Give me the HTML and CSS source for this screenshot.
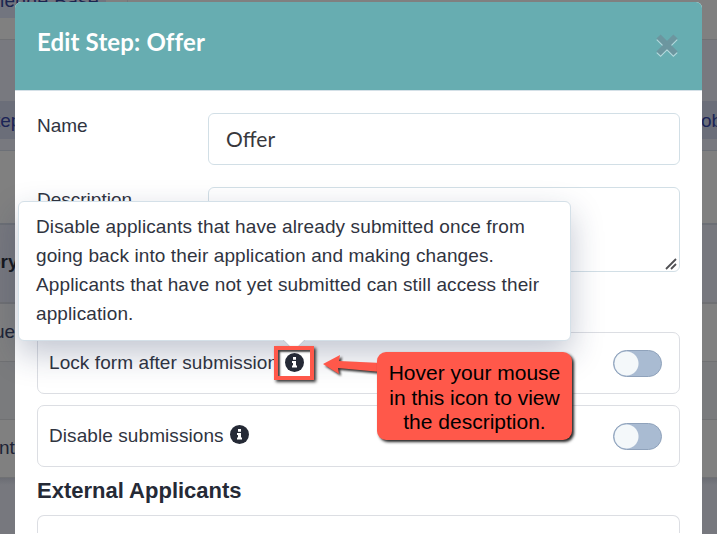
FILE: index.html
```
<!DOCTYPE html>
<html lang="en">
<head>
<meta charset="utf-8">
<title>Edit Step: Offer</title>
<link rel="stylesheet" href="styles.css">
</head>
<body>
<div class="backdrop">
  <div class="band band-nav"><span class="nav-chip">ledge Base</span><span class="nav-toggle"></span></div>
  <div class="band band-bar"></div>
  <div class="band band-gap"></div>
  <div class="band band-tabs"><span>tep</span><span>ob</span></div>
  <div class="band band-tabs-end"></div>
  <div class="band band-filter"></div>
  <div class="band band-heading"><span>ory</span></div>
  <div class="band band-row row-a"><span>ue</span></div>
  <div class="band band-row row-b"></div>
  <div class="band band-row row-c"><span>nt</span></div>
  <div class="band band-foot"></div>
</div>
<main class="modal">
  <header class="modal-head">
    <h1>Edit Step: Offer</h1>
    <svg class="close" width="26" height="26" viewBox="0 0 26 26"><path d="M4.500 6 21.500 23M21.500 6 4.500 23" stroke="#b5dadd" stroke-width="6"/><path d="M4.500 4.500 21.500 21.500M21.500 4.500 4.500 21.500" stroke="#6c969f" stroke-width="6"/></svg>
  </header>
  <section class="modal-body">
    <div class="field"><label>Name</label><div class="input">Offer</div></div>
    <div class="field"><label>Description</label><div class="input textarea"><svg width="12" height="12" viewBox="0 0 12 12"><path d="M1 11 11 1M6 11 11 6" stroke="#505054" stroke-width="1.8"/></svg></div></div>
    <div class="option option-lock">
      <span class="option-label">Lock form after submission</span>
      <span class="switch"></span>
    </div>
    <div class="option">
      <span class="option-label">Disable submissions</span>
      <svg class="info" width="19" height="19" viewBox="0 0 19 19"><circle cx="9.5" cy="9.5" r="9.5" fill="#252a36"/><path d="M8 4h3v2.700H8zM7 8h4v4.500h1v2H7v-2h1V10H7z" fill="#fff"/></svg>
      <span class="switch"></span>
    </div>
    <h2>External Applicants</h2>
    <div class="option option-cut"><span class="switch"></span></div>
  </section>
</main>
<div class="popover">
  <p>Disable applicants that have already submitted once from</p>
  <p>going back into their application and making changes.</p>
  <p>Applicants that have not yet submitted can still access their</p>
  <p>application.</p>
</div>
<svg class="popover-tip" width="22" height="12" viewBox="0 0 22 12"><path d="M0 0 11 11 22 0Z" fill="#fff"/><path d="M0 1 11 12 22 1" fill="none" stroke="#c8ced6"/></svg>
<div class="highlight"><svg class="info" width="19" height="19" viewBox="0 0 19 19"><circle cx="9.5" cy="9.5" r="9.5" fill="#252a36"/><path d="M8 4h3v2.700H8zM7 8h4v4.500h1v2H7v-2h1V10H7z" fill="#fff"/></svg></div>
<svg class="arrow" width="62" height="30" viewBox="0 0 62 30"><path d="M2 10 19 1 18 7 60 9V18L17 14 18 20Z" fill="#ff584a"/></svg>
<div class="callout"><p>Hover your mouse</p><p>in this icon to view</p><p>the description.</p></div>
</body>
</html>
```
FILE: styles.css
```
* { box-sizing: border-box; }
body {
  margin: 0;
  width: 717px;
  height: 534px;
  overflow: hidden;
  position: relative;
  background: #808080;
  color: #30343f;
  font-family: "Liberation Sans", Arial, sans-serif;
  font-size: 19px;
}
p, h1, h2 { margin: 0; white-space: nowrap; }

.backdrop { position: absolute; inset: 0; overflow: hidden; color: #1d2335; }
.band { display: flex; align-items: center; background: #808080; white-space: nowrap; overflow: hidden; }
.band-nav { height: 18px; align-items: flex-start; }
.nav-chip { width: 106px; height: 29px; margin-top: -11px; background: #72757f; color: #1b2550; line-height: 23px; letter-spacing: .4px; }
.nav-toggle { width: 40px; height: 18px; margin-left: 21px; border-left: 1px solid #75777b; }
.band-bar { height: 22px; border-bottom: 1px solid #707174; }
.band-gap { height: 61px; background: #78797f; }
.band-tabs { height: 38px; background: #6b6e79; color: #1b2456; justify-content: space-between; }
.band-tabs span { margin-top: 2px; }
.band-tabs span:first-child { margin-left: -5px; }
.band-tabs span:last-child { width: 16px; }
.band-tabs-end { height: 12px; background: #78797f; border-bottom: 1px solid #6c7077; }
.band-filter { height: 72px; }
.band-heading { height: 81px; background: #77787e; border-top: 2px solid #6c6f75; border-bottom: 2px solid #6f7073; color: #15171d; font-weight: bold; }
.band-heading span { margin-left: -11px; margin-top: -3px; }
.band-row { height: 58px; border-bottom: 1px solid #707173; }
.row-a span { margin-left: -6px; margin-top: -1px; }
.row-b { background: #7a7b7d; }
.row-c span { margin-left: -1px; margin-top: -2px; }
.band-foot { height: 56px; background: linear-gradient(#6b6d74, #77787e 7px); }

.modal {
  position: absolute;
  left: 15px;
  top: 2px;
  width: 687px;
  height: 532px;
  background: #fff;
  border-radius: 6px 6px 0 0;
  overflow: hidden;
}
.modal-head {
  height: 89px;
  padding: 0 22px;
  background: #67adb1;
  border-bottom: 1px solid #d4e0e7;
  display: flex;
  justify-content: space-between;
}
.modal-head h1 {
  font: bold 24px/30px Lato, sans-serif;
  letter-spacing: .15px;
  color: #fff;
  margin-top: 25px;
}
.close { margin-top: 30px; }
.modal-body { padding: 22px 22px 0; }
.field { display: flex; justify-content: space-between; margin-bottom: 22px; }
.field label { padding-top: 1px; line-height: 24px; }
.input {
  width: 472px;
  height: 52px;
  padding-left: 17px;
  border: 1px solid #d2dfe6;
  border-radius: 6px;
  font: 21px/49px Lato, sans-serif;
  color: #38383c;
}
.textarea { height: 85px; display: flex; align-items: flex-end; justify-content: flex-end; padding: 0 2px 1px 0; }
.option-lock { margin-top: 60px; }
.option {
  height: 62px;
  margin-bottom: 11px;
  padding: 0 17px 0 11px;
  border: 1px solid #dcdee3;
  border-radius: 7px;
  display: flex;
  align-items: center;
}
.option-label { margin-right: 6px; white-space: nowrap; letter-spacing: .08px; }
.option-cut { height: 18px; margin: 0; border-bottom: 0; border-radius: 7px 7px 0 0; align-items: flex-start; overflow: hidden; }
.option-cut .switch { flex: none; margin-top: 17px; }
.info { display: block; flex: none; }
.option .info { margin-bottom: 3px; }
.switch {
  width: 49px;
  height: 27px;
  margin-left: auto;
  border: 1px solid #8fa2bb;
  border-radius: 14px;
  background: radial-gradient(circle at 12.5px 12.5px, #f4f8fa 11.5px, transparent 12.5px) #a9bbd2;
}
h2 { font-size: 22px; line-height: 26px; margin-bottom: 11px; color: #252a36; }

.popover {
  position: absolute;
  left: 18px;
  top: 201px;
  width: 553px;
  height: 140px;
  padding: 10px 17px;
  background: #fff;
  border: 1px solid #d4e0e8;
  border-radius: 6px;
  box-shadow: 0 13px 32px rgba(31, 45, 85, .27);
  letter-spacing: .11px;
}
.popover p { line-height: 29px; }
.popover-tip { position: absolute; left: 283px; top: 339px; }
.highlight {
  position: absolute;
  left: 274px;
  top: 346px;
  width: 40px;
  height: 34px;
  padding: 3px 7px;
  border: 4px solid #ff584a;
  background: #fff;
  box-shadow: 2px 2px 3px #333, inset 2px 2px 2px #444;
}
.arrow { position: absolute; left: 321px; top: 354px; filter: drop-shadow(2px 2px 1px #333); }
.callout {
  position: absolute;
  left: 377px;
  top: 352px;
  width: 195px;
  height: 88px;
  padding-top: 9px;
  border-radius: 9px;
  background: #ff584a;
  box-shadow: 2px 2px 3px #222;
  color: #000;
  font-size: 21px;
  text-align: center;
}
.callout p { line-height: 24.5px; }
```
